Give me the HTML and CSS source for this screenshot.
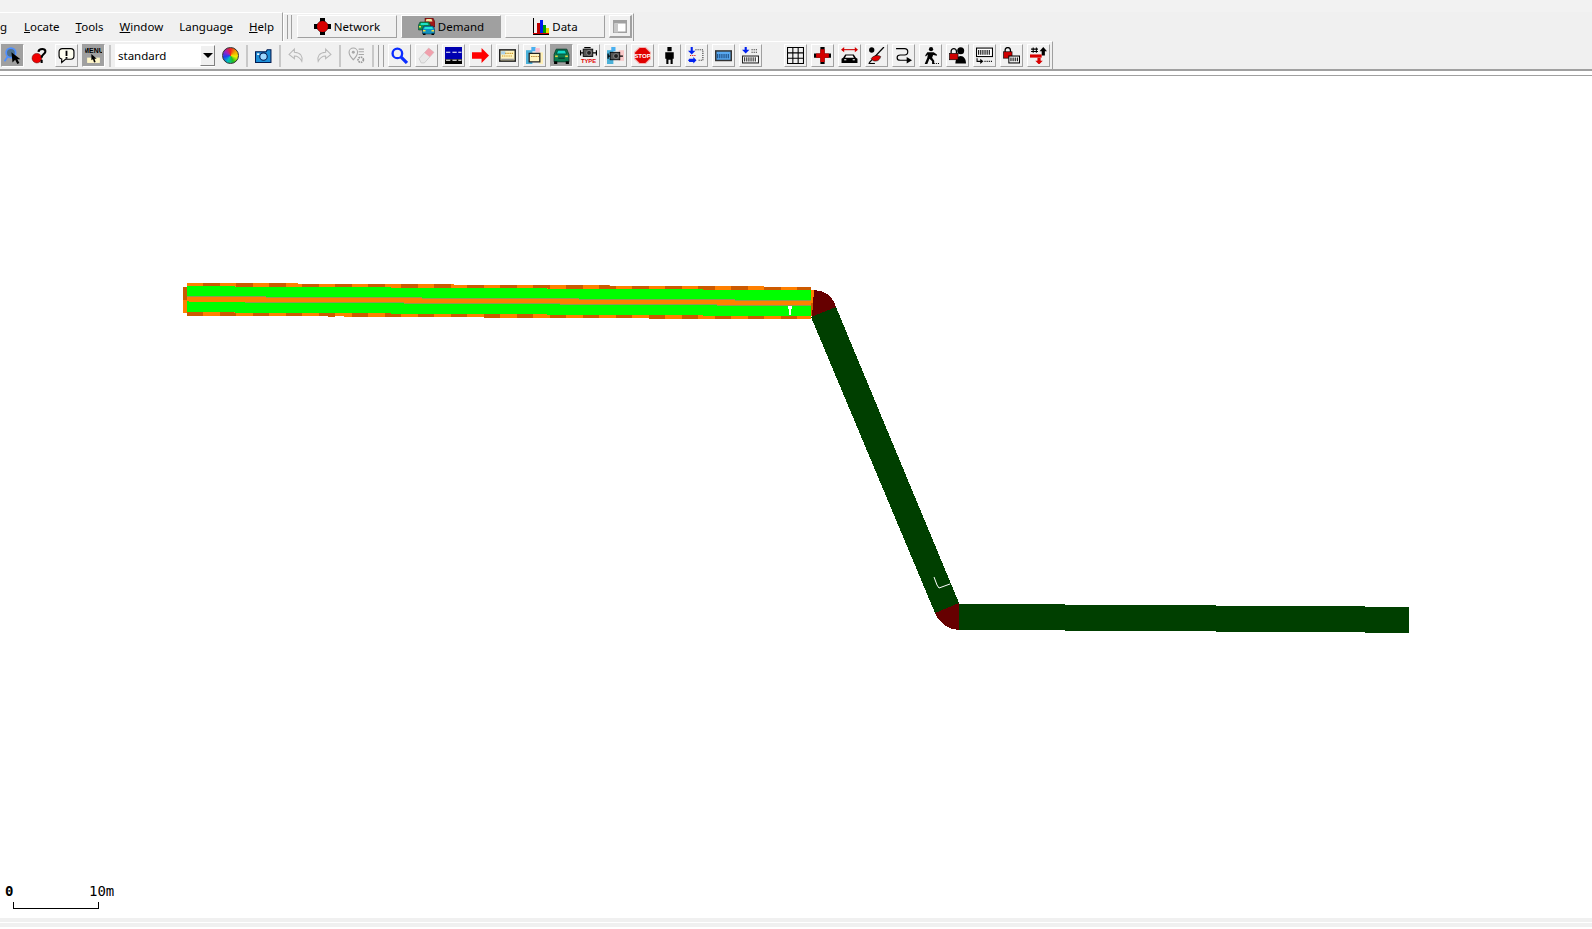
FILE: index.html
```html
<!DOCTYPE html>
<html>
<head>
  <meta charset="utf-8">
  <title>Network editor</title>
  <link rel="stylesheet" href="styles.css">
</head>
<body>
  <svg class="defs">
    <symbol id="i-sel" viewBox="0 0 16 16">
      <circle cx="6.500" cy="5.500" r="4.500" fill="#50708a" stroke="#4f8fff" stroke-width="1.600"/>
      <path d="M3.500 9L0.500 13.500" stroke="#4f8fff" stroke-width="1.800"/>
      <path d="M7 5l8.500 6.500h-3l2 3.500-2 1-2-4-2.500 2.500z" fill="#000"/>
    </symbol>
    <symbol id="i-help" viewBox="0 0 16 16">
      <circle cx="5.500" cy="10.500" r="4.500" fill="#f00000" stroke="#600" stroke-width=".5"/>
      <path d="M7 4.500C7.500 1 14 1 13.500 4.500C13 7 10 7 10 10M10 12v3" fill="none" stroke="#000" stroke-width="2"/>
    </symbol>
    <symbol id="i-note" viewBox="0 0 16 16">
      <path d="M4 1.500h8a3 3 0 0 1 3 3v4a3 3 0 0 1-3 3H7l-3.500 3v-3.200A3 3 0 0 1 1 8.500v-4a3 3 0 0 1 3-3z" fill="#fffff0" stroke="#000" stroke-width="1.100"/>
      <path d="M8 3.500v5M8 9.500v1.500" stroke="#000" stroke-width="1.700"/>
    </symbol>
    <symbol id="i-menu" viewBox="0 0 16 16">
      <rect x="2" y="10" width="12" height="5" fill="#fff6c8"/>
      <text x="8" y="5.500" class="ico-text" font-size="6.500" text-anchor="middle" fill="#000">MENU</text>
      <path d="M6 6.500l5 4.500h-2l1 3-1.500.5-1-3-1.500 1z" fill="#000"/>
    </symbol>
    <symbol id="i-camera" viewBox="0 0 16 16">
      <path d="M0.500 4.500h10l1-2h3.500v12H0.500z" fill="#1d8fd8" stroke="#001a50" stroke-width="1"/>
      <circle cx="8" cy="9" r="3.500" fill="#9fd8ff" stroke="#001a50"/>
      <rect x="2" y="6" width="2" height="1.500" fill="#fff"/>
    </symbol>
    <symbol id="i-undo" viewBox="0 0 16 16">
      <path d="M6 2L1 7l5 4V8.500c3 0 5 1 7 5c1-5-1-8-7-8.500z" fill="none" stroke="#b8b8b8"/>
    </symbol>
    <symbol id="i-redo" viewBox="0 0 16 16">
      <path d="M10 2l5 5-5 4V8.500c-3 0-5 1-7 5c-1-5 1-8 7-8.500z" fill="none" stroke="#b8b8b8"/>
    </symbol>
    <symbol id="i-pin" viewBox="0 0 16 16">
      <path d="M5 1a4 4 0 0 1 4 4c0 3-4 7-4 7s-4-4-4-7a4 4 0 0 1 4-4z" fill="none" stroke="#a8a8a8"/>
      <circle cx="5" cy="5" r="1.400" fill="#a8a8a8"/>
      <path d="M10 2h5M10 4.500h5M10 7h5" stroke="#a8a8a8"/>
      <circle cx="12" cy="12" r="2.500" fill="none" stroke="#999" stroke-width="1.600" stroke-dasharray="1.500 .8"/>
    </symbol>
    <symbol id="i-search" viewBox="0 0 16 16">
      <circle cx="6" cy="6" r="4.500" fill="none" stroke="#0a2cff" stroke-width="2.200"/>
      <path d="M9.500 9.500l5.500 5.500" stroke="#0a2cff" stroke-width="3"/>
    </symbol>
    <symbol id="i-eraser" viewBox="0 0 16 16">
      <path d="M10 1l5 4-9 10H3L1 11z" fill="#e8e8e8" stroke="#c4c4c4" stroke-width=".7"/>
      <path d="M10 1l5 4-4 4.500-5-4z" fill="#f0a0ac"/>
    </symbol>
    <symbol id="i-road" viewBox="0 0 16 16">
      <rect width="16" height="11.500" fill="#0000b0"/>
      <rect y="11.500" width="16" height="4.500" fill="#000"/>
      <path d="M1 5h4M7 5h4M12.500 5h3M1 12.500h4M7 12.500h4M12.500 12.500h3" stroke="#fff" stroke-width="1"/>
    </symbol>
    <symbol id="i-arrow" viewBox="0 0 16 16">
      <path d="M0 5h9V1l7 7-7 7v-4H0z" fill="#f00"/>
    </symbol>
    <symbol id="i-board" viewBox="0 0 16 16">
      <rect x=".7" y="2.700" width="14.600" height="10.600" fill="#fff4c0" stroke="#222" stroke-width="1.400"/>
      <rect x="2" y="4" width="4" height="3" fill="#a8d0e8"/>
      <path d="M6 6h8M3 8.500h10" stroke="#c08000" stroke-dasharray="1 1"/>
      <rect x="2" y="11" width="12" height="1.200" fill="#999"/>
    </symbol>
    <symbol id="i-boardc" viewBox="0 0 16 16">
      <rect x="0" y="3" width="6" height="13" fill="#4ab0d8"/>
      <rect x="5" y="0" width="4" height="4" fill="#4ab0f0"/>
      <rect x="9" y="1" width="4" height="4" fill="#f8c0d0"/>
      <rect x="12" y="5" width="4" height="11" fill="#fff0b8"/>
      <rect x="3" y="6" width="10" height="8" fill="#fff4c0" stroke="#222" stroke-width="1.200"/>
      <path d="M5 9h7" stroke="#a06000" stroke-dasharray="1 1"/>
    </symbol>
    <symbol id="i-car" viewBox="0 0 16 16">
      <path d="M3 2h10l2 5v7H1V7z" fill="#0a7a50" stroke="#003020" stroke-width=".7"/>
      <path d="M4.500 3h7l1.200 3.500H3.300z" fill="#10d8c8" stroke="#003020" stroke-width=".6"/>
      <rect x="2" y="8" width="2.500" height="1.500" fill="#e8d040"/>
      <rect x="11.500" y="8" width="2.500" height="1.500" fill="#e8d040"/>
      <rect x="5" y="10" width="6" height="1" fill="#003020"/>
      <rect x="1" y="13.500" width="3" height="2.500" fill="#000"/>
      <rect x="12" y="13.500" width="3" height="2.500" fill="#000"/>
    </symbol>
    <symbol id="i-engine" viewBox="0 0 16 16">
      <rect x="3" y="2" width="9" height="7" fill="#555" stroke="#000" stroke-width=".8"/>
      <path d="M4 0.500h6" stroke="#000" stroke-width="1.200"/>
      <circle cx="8.500" cy="5.500" r="2.300" fill="#222" stroke="#aaa" stroke-width=".6"/>
      <path d="M0.500 3v5M3 5.500H0.500M12 5.500h3.500M15.500 3v5" stroke="#000" stroke-width="1.200"/>
      <text x="8" y="15.500" class="ico-text" font-size="5.500" text-anchor="middle" fill="#e00000">TYPE</text>
    </symbol>
    <symbol id="i-enginec" viewBox="0 0 16 16">
      <rect x="0" y="3" width="6" height="13" fill="#4ab0d8"/>
      <rect x="4" y="0" width="4" height="4" fill="#4ab0f0"/>
      <rect x="11" y="3" width="5" height="10" fill="#f8c8c8"/>
      <rect x="3" y="5" width="9" height="7" fill="#555" stroke="#000" stroke-width=".8"/>
      <circle cx="8.500" cy="8.500" r="2.300" fill="#222" stroke="#aaa" stroke-width=".6"/>
      <path d="M1 6v5M3 8.500H1M12 8.500h3" stroke="#000" stroke-width="1.200"/>
    </symbol>
    <symbol id="i-stop" viewBox="0 0 16 16">
      <path d="M5 0.500h6l4.500 4.500v6L11 15.500H5L0.500 11V5z" fill="#e00000" stroke="#f4b0b0"/>
      <text x="8" y="10.300" class="ico-text" font-size="5.800" text-anchor="middle" fill="#fff">STOP</text>
    </symbol>
    <symbol id="i-person" viewBox="0 0 16 16">
      <rect x="6" y="0" width="4" height="4" fill="#000"/>
      <path d="M4 5h8v6h-1v5H9v-4H7v4H5v-5H4z" fill="#000"/>
    </symbol>
    <symbol id="i-detect" viewBox="0 0 16 16">
      <path d="M3.500 0v4" stroke="#0020f0" stroke-width="2"/>
      <path d="M0 3.500h7L3.500 7zM0 12h1v-1h4v-1.500L8 12.500 5 15.500V14H1v-1H0z" fill="#0020f0"/>
      <path d="M7 2.500h7v10H9" fill="none" stroke="#333" stroke-dasharray="1 1"/>
      <path d="M2 8h6" stroke="#e00000" stroke-dasharray="1 1"/>
    </symbol>
    <symbol id="i-batt" viewBox="0 0 16 16">
      <rect x=".7" y="3.700" width="14.600" height="9" fill="#58a8f0" stroke="#333" stroke-width="1.400"/>
      <path d="M2 8.500h12" stroke="#1a4a80" stroke-dasharray="1 1" stroke-width="4"/>
    </symbol>
    <symbol id="i-kbd" viewBox="0 0 16 16">
      <path d="M3.500 0v3" stroke="#0020f0" stroke-width="2"/>
      <path d="M0 2.500h7L3.500 6z" fill="#0020f0"/>
      <path d="M9 2.500h5M9 5h5" stroke="#222" stroke-dasharray="1 1"/>
      <rect x=".5" y="8.500" width="15" height="6.500" fill="#fff" stroke="#222"/>
      <path d="M2 11.700h12" stroke="#222" stroke-dasharray="1 1" stroke-width="4"/>
    </symbol>
    <symbol id="i-grid" viewBox="0 0 16 16">
      <path d="M.5.500h15v15H.5zM5.500.5v15M10.500.5v15M.5 5.500h15M.5 10.500h15" fill="none" stroke="#000"/>
    </symbol>
    <symbol id="i-cross" viewBox="0 0 16 16">
      <path d="M6 0h4v6h6v4h-6v6H6v-6H0V6h6z" fill="#000"/>
      <path d="M6 2h4v4h4v4h-4v4H6v-4H2V6h4z" fill="#d40000"/>
    </symbol>
    <symbol id="i-widecar" viewBox="0 0 16 16">
      <path d="M1 2.500h14" stroke="#d00000"/>
      <path d="M0 2.500l3-2.500v5zM16 2.500l-3-2.500v5z" fill="#d00000"/>
      <path d="M4 7h8l2 3 1.500 1v4H.5v-4L2 10z" fill="#000"/>
      <path d="M5 8h6l1.200 2H3.800z" fill="#fff"/>
      <rect x="3" y="11.500" width="2" height="1" fill="#fff"/>
      <rect x="11" y="11.500" width="2" height="1" fill="#fff"/>
    </symbol>
    <symbol id="i-leaf" viewBox="0 0 16 16">
      <circle cx="3.500" cy="2.800" r="2.500" fill="#000"/>
      <path d="M15 0L1 15" stroke="#000" stroke-width="1.200"/>
      <path d="M3 11c2-3 6-4 9-2-1 3-3 5-7 4z" fill="#e00000" stroke="#000" stroke-width=".5"/>
      <path d="M0.500 15.500h6" stroke="#000"/>
    </symbol>
    <symbol id="i-route" viewBox="0 0 16 16">
      <path d="M12 1.500H4C0 1.500 0 7.500 4 7.500h4c4 0 4 5 0 5H1" transform="matrix(-1 0 0 1 13 0)" fill="none" stroke="#000" stroke-width="1.100"/>
      <path d="M11 9.500l5 3-5 3z" fill="#000"/>
    </symbol>
    <symbol id="i-walk" viewBox="0 0 16 16">
      <circle cx="8.500" cy="2" r="2" fill="#000"/>
      <path d="M5 5h6l3 2v1.200L10.500 7.500 9.500 10l2 3v3H9.500v-2.500L7 11 5 16H2.500L5 10l.5-3-2 2L3 8z" fill="#000"/>
      <path d="M11 15.500h5" stroke="#000" stroke-dasharray="1 1"/>
    </symbol>
    <symbol id="i-lockp" viewBox="0 0 16 16">
      <circle cx="11" cy="3.500" r="3.300" fill="#000"/>
      <path d="M6 15.500c0-4 2-7 5-7s5 3 5 7z" fill="#000"/>
      <path d="M2 6V4a2.500 2.500 0 0 1 5 0v2" fill="none" stroke="#000" stroke-width="1.200"/>
      <rect x="0.500" y="6" width="8" height="6" fill="#d00000" stroke="#000" stroke-width=".6"/>
    </symbol>
    <symbol id="i-lane" viewBox="0 0 16 16">
      <rect x=".5" y="1" width="15" height="8" fill="#fff" stroke="#000"/>
      <path d="M2 5h12" stroke="#000" stroke-dasharray="1 1" stroke-width="4.500"/>
      <path d="M1 10.500v3h4" fill="none" stroke="#000"/>
      <path d="M4 11l3 2.500-3 2.500z" fill="#000"/>
      <path d="M8 13.500h8" stroke="#000" stroke-dasharray="1 1"/>
    </symbol>
    <symbol id="i-lockb" viewBox="0 0 16 16">
      <path d="M2 5V3a2.500 2.500 0 0 1 5 0v2" fill="none" stroke="#000" stroke-width="1.200"/>
      <rect x="0.500" y="4.500" width="8" height="6" fill="#d00000" stroke="#000" stroke-width=".6"/>
      <rect x="5.500" y="8.500" width="10" height="6.500" fill="#fff" stroke="#000"/>
      <path d="M7 11.700h7" stroke="#000" stroke-dasharray="1 1" stroke-width="3.500"/>
    </symbol>
    <symbol id="i-swap" viewBox="0 0 16 16">
      <path d="M3 .5v5M6 .5v5M1 2h6.500M1 4.300h6.500" stroke="#000"/>
      <path d="M12.500 0l3.500 4h-2v4h-3V4H9z" fill="#000"/>
      <rect x="0" y="7" width="11" height="3" fill="#d80000"/>
      <path d="M7 10h3v3h2l-3.500 3.500L5 13h2z" fill="#d80000"/>
    </symbol>
    <symbol id="i-net" viewBox="0 0 17 17">
      <path d="M6 0h5v3l3 3h3v5h-3l-3 3v3H6v-3L3 11H0V6h3l3-3z" fill="#000"/>
      <circle cx="8.500" cy="8.500" r="5.500" fill="#d80000"/>
    </symbol>
    <symbol id="i-demand" viewBox="0 0 17 17">
      <path d="M7 0h8l2 4v5H7z" fill="#a01818" stroke="#400" stroke-width=".5"/>
      <path d="M8.500 1h5l1 2.500h-7z" fill="#f0e8a0"/>
      <path d="M2 4h9l1.500 3v5H0.500V7z" fill="#109050" stroke="#032" stroke-width=".5"/>
      <path d="M3 5h6.500l1 2H2.500z" fill="#20e0c8"/>
      <path d="M6 8h9l1.500 3v5H4.500v-5z" fill="#1090c0" stroke="#023" stroke-width=".5"/>
      <path d="M7 9h7l1 2H6z" fill="#20e8d8"/>
      <rect x="5" y="12" width="2.500" height="1.500" fill="#f0e040"/>
      <rect x="13.500" y="12" width="2.500" height="1.500" fill="#f0e040"/>
      <rect x="1" y="8" width="2" height="1.500" fill="#f0e040"/>
      <rect x="5" y="15.500" width="2.500" height="1.500" fill="#000"/>
      <rect x="13.500" y="15.500" width="2.500" height="1.500" fill="#000"/>
    </symbol>
    <symbol id="i-data" viewBox="0 0 17 17">
      <rect x="1" y="0" width="1" height="16" fill="#000"/>
      <rect x="5" y="5" width="3" height="10" fill="#c00000"/>
      <rect x="8" y="2" width="3" height="13" fill="#0018f0"/>
      <rect x="11" y="7" width="3" height="8" fill="#00a000"/>
      <rect x="14" y="10" width="3" height="5" fill="#e8d800"/>
      <rect x="1" y="15" width="16" height="2" fill="#d00000"/>
      <rect x="1" y="16" width="16" height="1" fill="#000"/>
    </symbol>
    <symbol id="i-window" viewBox="0 0 14 13">
      <rect x=".75" y=".75" width="12.500" height="11.500" fill="#fff" stroke="#a0a0a0" stroke-width="1.500"/>
      <rect x="1" y="1" width="12" height="2.500" fill="#a0a0a0"/>
      <rect x="1" y="3.500" width="4" height="9" fill="#c8c8c8"/>
    </symbol>
  </svg>

  <div class="topgap"></div>

  <div class="menurow">
    <div class="menubar">
      <span class="menu-item item-cut">g</span>
      <span class="menu-item"><u>L</u>ocate</span>
      <span class="menu-item"><u>T</u>ools</span>
      <span class="menu-item"><u>W</u>indow</span>
      <span class="menu-item">Language</span>
      <span class="menu-item"><u>H</u>elp</span>
    </div>
    <div class="modes">
      <div class="grip"></div>
      <button class="mode"><svg class="mode-ico"><use href="#i-net"/></svg>Network</button>
      <button class="mode active"><svg class="mode-ico"><use href="#i-demand"/></svg>Demand</button>
      <button class="mode"><svg class="mode-ico"><use href="#i-data"/></svg>Data</button>
      <button class="btn winbtn"><svg class="win-ico"><use href="#i-window"/></svg></button>
    </div>
  </div>

  <div class="toolrow">
    <div class="toolbar">
      <button class="btn active"><svg class="ico"><use href="#i-sel"/></svg></button>
      <button class="btn flat"><svg class="ico"><use href="#i-help"/></svg></button>
      <button class="btn"><svg class="ico"><use href="#i-note"/></svg></button>
      <button class="btn active"><svg class="ico"><use href="#i-menu"/></svg></button>
      <div class="sep"></div>
      <div class="combo"><span class="combo-text">standard</span><span class="combo-arrow"></span></div>
      <button class="btn flat"><span class="wheel"></span></button>
      <div class="sep"></div>
      <button class="btn flat"><svg class="ico"><use href="#i-camera"/></svg></button>
      <div class="sep"></div>
      <button class="btn flat"><svg class="ico"><use href="#i-undo"/></svg></button>
      <button class="btn flat"><svg class="ico"><use href="#i-redo"/></svg></button>
      <div class="sep"></div>
      <button class="btn flat"><svg class="ico"><use href="#i-pin"/></svg></button>
      <div class="sep"></div>
      <div class="grip small"></div>
      <button class="btn"><svg class="ico"><use href="#i-search"/></svg></button>
      <button class="btn"><svg class="ico"><use href="#i-eraser"/></svg></button>
      <button class="btn"><svg class="ico"><use href="#i-road"/></svg></button>
      <button class="btn"><svg class="ico"><use href="#i-arrow"/></svg></button>
      <button class="btn"><svg class="ico"><use href="#i-board"/></svg></button>
      <button class="btn"><svg class="ico"><use href="#i-boardc"/></svg></button>
      <button class="btn active"><svg class="ico"><use href="#i-car"/></svg></button>
      <button class="btn"><svg class="ico"><use href="#i-engine"/></svg></button>
      <button class="btn"><svg class="ico"><use href="#i-enginec"/></svg></button>
      <button class="btn"><svg class="ico"><use href="#i-stop"/></svg></button>
      <button class="btn"><svg class="ico"><use href="#i-person"/></svg></button>
      <button class="btn"><svg class="ico"><use href="#i-detect"/></svg></button>
      <button class="btn"><svg class="ico"><use href="#i-batt"/></svg></button>
      <button class="btn"><svg class="ico"><use href="#i-kbd"/></svg></button>
      <div class="spacer"></div>
      <button class="btn"><svg class="ico"><use href="#i-grid"/></svg></button>
      <button class="btn"><svg class="ico"><use href="#i-cross"/></svg></button>
      <button class="btn"><svg class="ico"><use href="#i-widecar"/></svg></button>
      <button class="btn"><svg class="ico"><use href="#i-leaf"/></svg></button>
      <button class="btn"><svg class="ico"><use href="#i-route"/></svg></button>
      <button class="btn"><svg class="ico"><use href="#i-walk"/></svg></button>
      <button class="btn"><svg class="ico"><use href="#i-lockp"/></svg></button>
      <button class="btn"><svg class="ico"><use href="#i-lane"/></svg></button>
      <button class="btn"><svg class="ico"><use href="#i-lockb"/></svg></button>
      <button class="btn"><svg class="ico"><use href="#i-swap"/></svg></button>
    </div>
  </div>

  <div class="rule"></div>

  <svg class="canvas" viewBox="0 76 1592 842">
    <!-- first road, selected -->
    <g shape-rendering="crispEdges">
      <polygon points="187,286.200 811,290.200 811,316.200 187,312.200" fill="#00ff00"/>
      <polygon points="187,282.800 811,286.800 811,290.200 187,286.200" fill="#ff8000"/>
      <polygon points="187,312.200 811,316.200 811,319.500 187,315.500" fill="#ff8000"/>
      <line x1="187" y1="284.500" x2="811" y2="288.500" stroke="#cc5a00" stroke-width="3.400" stroke-dasharray="16.500 16.500" stroke-dashoffset="16.500"/>
      <line x1="187" y1="313.900" x2="811" y2="317.900" stroke="#cc5a00" stroke-width="3.400" stroke-dasharray="16.500 16.500" stroke-dashoffset="0"/>
      <line x1="187" y1="299.200" x2="811" y2="303.200" stroke="#ff8000" stroke-width="4.600"/>
      <line x1="187" y1="296.500" x2="811" y2="300.500" stroke="#8f9a50" stroke-width="1"/>
      <line x1="245" y1="302" x2="811" y2="305.600" stroke="#8f9a50" stroke-width="1"/>
      <rect x="183" y="287" width="4" height="13" fill="#cc5a00"/>
      <rect x="183" y="300" width="4" height="13" fill="#ff8000"/>
      <rect x="811" y="290" width="3" height="13" fill="#ff8000"/>
      <rect x="811" y="303" width="3" height="13" fill="#cc5a00"/>
      <!-- junctions and the other two roads -->
      <path d="M814 290C824 290 832 296 835 304L836 307L812 317Z" fill="#660000"/>
      <polygon points="811,317 836,307 959,603 935,613" fill="#003f00"/>
      <path d="M935 613C938 622 948 630 959 630L959 603Z" fill="#660000"/>
      <polygon points="959,603.800 1409,606.800 1409,632.800 959,629.800" fill="#003f00"/>
      <path d="M788 306h4v3h-1v6h-2v-6h-1z" fill="#fff"/>
    </g>
    <path d="M934 577L937 585L939 588L950 584" fill="none" stroke="#fff" stroke-width="1"/>
    <text x="5" y="895.500" class="scale-text zero">0</text>
    <text x="89" y="895.500" class="scale-text">10m</text>
    <path d="M13.500 902v6.500h84.500V902" fill="none" stroke="#000" shape-rendering="crispEdges"/>
  </svg>

  <div class="statusbar"></div>
</body>
</html>
```

FILE: styles.css
```css
* {
  box-sizing: border-box;
}
html, body {
  height: 100%;
}
body {
  background-color: #FFFFFF;
  color: #000000;
  display: flex;
  flex-direction: column;
  font-family: "Noto Sans", sans-serif;
  font-size: 11.500px;
  margin: 0;
  overflow: hidden;
}
button {
  color: inherit;
  font: inherit;
  margin: 0;
  padding: 0;
}
.defs {
  display: none;
}
.ico-text {
  font-family: "Liberation Sans", sans-serif;
  font-weight: bold;
}
.topgap {
  background-color: #F2F2F2;
  flex: none;
  height: 12px;
}
.menurow {
  background-color: #F0F0F0;
  display: flex;
  flex: none;
  height: 29px;
}
.menubar {
  align-items: center;
  border-right: 1px solid #A0A0A0;
  border-top: 1px solid #FFFFFF;
  display: flex;
  gap: 16px;
  padding-bottom: 1px;
  width: 283px;
}
.menu-item {
  white-space: nowrap;
}
.item-cut {
  width: 8px;
}
.modes {
  align-items: center;
  border-left: 1px solid #FFFFFF;
  border-right: 1px solid #A0A0A0;
  border-top: 1px solid #FFFFFF;
  display: flex;
  gap: 4px;
  margin-top: 1px;
  padding: 0 1px 2px 3px;
}
.grip {
  align-self: stretch;
  border-left: 1px solid #A0A0A0;
  border-right: 1px solid #A0A0A0;
  margin: 1px 1px 0 0;
  width: 5px;
}
.grip.small {
  flex: none;
  margin: 3px 0 2px;
  width: 6px;
}
.mode {
  align-items: center;
  background-color: #F0F0F0;
  border: 1px solid;
  border-color: #FFFFFF #A0A0A0 #A0A0A0 #FFFFFF;
  display: flex;
  gap: 3px;
  height: 23px;
  justify-content: center;
  width: 100px;
}
.mode.active {
  background-color: #A0A0A0;
}
.mode-ico {
  height: 17px;
  width: 17px;
}
.btn {
  align-items: center;
  background-color: #F0F0F0;
  border: 1px solid;
  border-color: #FFFFFF #A0A0A0 #A0A0A0 #FFFFFF;
  display: flex;
  flex: none;
  height: 23px;
  justify-content: center;
  width: 23px;
}
.btn.active {
  background-color: #A0A0A0;
  border-color: #A0A0A0 #FFFFFF #FFFFFF #A0A0A0;
}
.btn.flat {
  border-color: transparent;
}
.winbtn {
  border-bottom-width: 2px;
  border-right-width: 2px;
}
.win-ico {
  height: 13px;
  width: 14px;
}
.ico {
  height: 17px;
  width: 17px;
}
.toolrow {
  background-color: #F0F0F0;
  border-bottom: 2px solid #A0A0A0;
  flex: none;
  height: 30px;
}
.toolbar {
  align-items: center;
  border-right: 1px solid #A0A0A0;
  border-top: 1px solid #FFFFFF;
  display: flex;
  gap: 4px;
  height: 28px;
  padding: 0 2px 0 1px;
  width: fit-content;
}
.sep {
  align-self: stretch;
  background-color: #C8C8C8;
  flex: none;
  margin: 3px 0 2px;
  width: 2px;
}
.spacer {
  flex: none;
  width: 14px;
}
.combo {
  align-items: center;
  background-color: #FFFFFF;
  display: flex;
  flex: none;
  height: 23px;
  justify-content: space-between;
  width: 100px;
}
.combo-text {
  padding-left: 3px;
}
.combo-arrow {
  align-items: center;
  background-color: #F0F0F0;
  border: 1px solid;
  border-color: #FFFFFF #808080 #808080 #FFFFFF;
  display: flex;
  height: 21px;
  justify-content: center;
  width: 15px;
}
.combo-arrow::before {
  border-left: 5px solid transparent;
  border-right: 5px solid transparent;
  border-top: 5px solid #000000;
  content: "";
}
.wheel {
  background: conic-gradient(#F02020, #F0A000, #F0F000, #20C020, #00C0C0, #2040F0, #A020C0, #F02020);
  border: 1px solid #303030;
  border-radius: 50%;
  height: 17px;
  width: 17px;
}
.rule {
  background-color: #A0A0A0;
  flex: none;
  height: 1px;
  margin-top: 4px;
}
.canvas {
  display: block;
  flex: none;
  height: 842px;
  width: 1592px;
}
.scale-text {
  font-family: "DejaVu Sans Mono", monospace;
  font-size: 14px;
}
.zero {
  font-weight: bold;
}
.statusbar {
  background-color: #F0F0F0;
  border-top: 4px solid #F0F0F0;
  box-shadow: inset 0 1px 0 #FFFFFF;
  flex: none;
  height: 9px;
}
```
